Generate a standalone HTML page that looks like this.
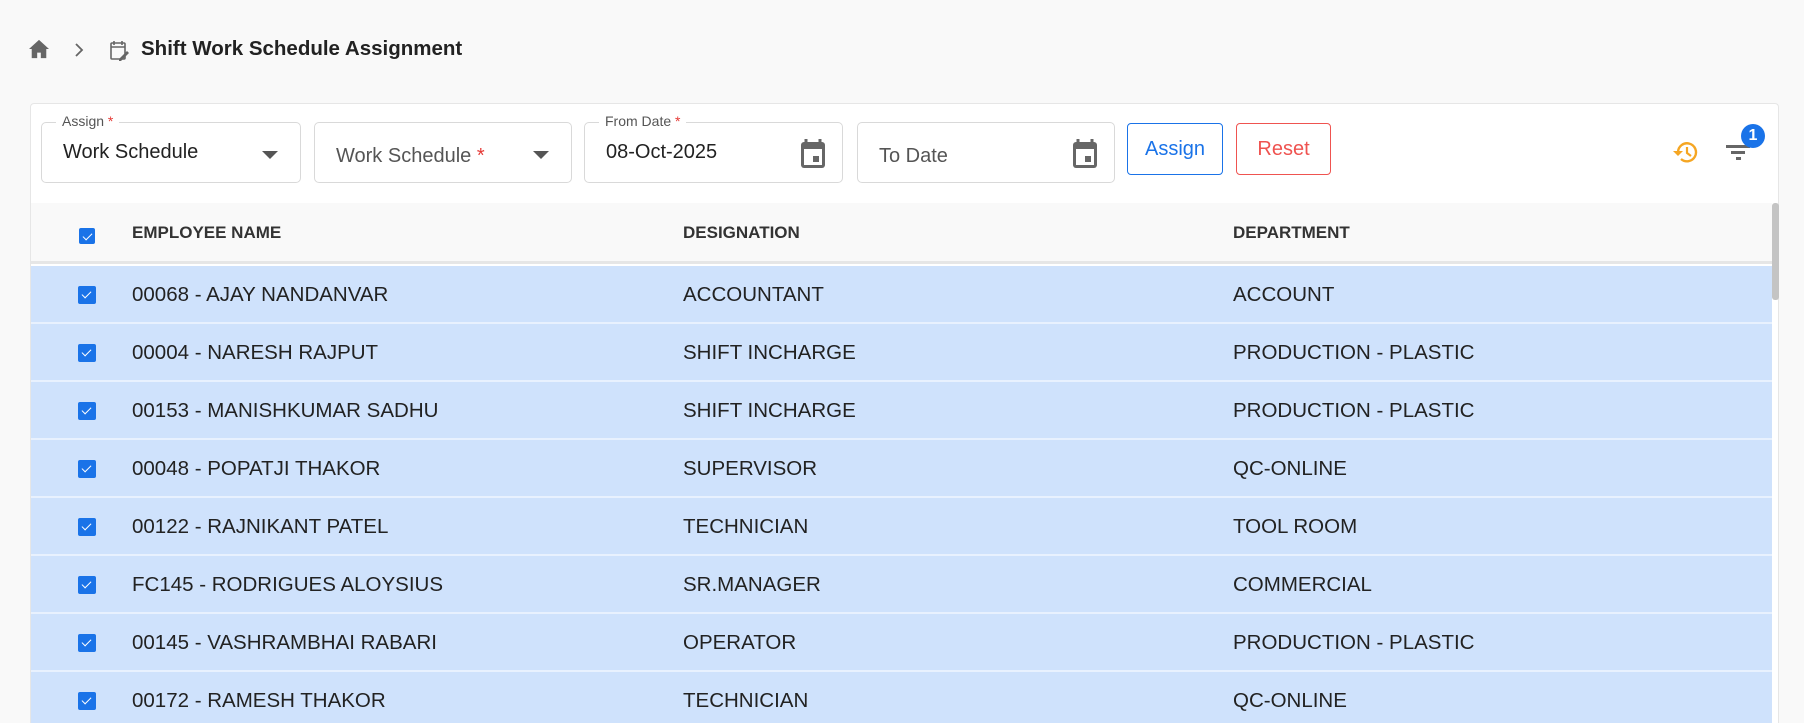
<!DOCTYPE html>
<html style="width:1804px;height:723px;overflow:hidden"><head><style>
*{box-sizing:border-box;margin:0;padding:0}
body{width:1804px;height:723px;overflow:hidden;background:#f9f9f9;font-family:"Liberation Sans",sans-serif;color:#222;position:relative}
.abs{position:absolute}
.card{left:30px;top:103px;width:1749px;height:620px;background:#fff;border:1px solid #e6e6e6;border-bottom:none;border-radius:4px 4px 0 0}
.field{position:absolute;top:122px;height:61px;border:1px solid #d9d9d9;border-radius:5px;background:#fff}
.lbl{position:absolute;top:-10px;left:14px;background:#fff;padding:0 6px;font-size:14px;color:#555}
.req{color:#e53935}
.val{position:absolute;left:21px;top:18px;font-size:20px;color:#222}
.ph{position:absolute;left:21px;top:22px;font-size:20px;color:#555}
.caret{position:absolute;right:22px;top:28px;width:0;height:0;border-left:8px solid transparent;border-right:8px solid transparent;border-top:8px solid #555}
.btn{position:absolute;top:123px;height:52px;border-radius:4px;font-size:20px;text-align:center;line-height:50px;background:#fff}
.hdr{left:31px;top:203px;width:1741px;height:61px;background:#f9f9f9;border-bottom:3px solid #e6e6e6}
.hdr span{position:absolute;top:20px;font-size:17px;font-weight:bold;color:#333}
.row{position:absolute;left:31px;width:1741px;height:58px;background:#cfe2fc;border-bottom:2px solid #e8f1fe}
.row span{position:absolute;top:17px;font-size:20.5px;color:#222}
.cb{position:absolute;left:47px;width:18px;height:18px;background:#1a73e8;border-radius:2px}
.cb:after{content:"";position:absolute;left:6px;top:3px;width:4px;height:8px;border:solid #fff;border-width:0 1.5px 1.5px 0;transform:rotate(45deg)}
</style></head><body>
<svg class="abs" style="left:28px;top:39px" width="22" height="20" viewBox="0 0 24 22"><path d="M12 1 1 11h3v10h6v-6h4v6h6V11h3z" fill="#666"/></svg>
<svg class="abs" style="left:74px;top:42px" width="10" height="16" viewBox="0 0 10 16"><path d="M2 2l6 6-6 6" fill="none" stroke="#666" stroke-width="1.8"/></svg>
<svg class="abs" style="left:108px;top:39px" width="24" height="24" viewBox="0 0 24 24"><rect x="3" y="4" width="14" height="16" rx="1" fill="none" stroke="#666" stroke-width="1.6"/><path d="M6 2v4M14 2v4M3 8h14" stroke="#666" stroke-width="1.6"/><path d="M11 20l8-8 2 2-8 8h-2z" fill="#666"/></svg>
<div class="abs" style="left:141px;top:37px;font-size:20.5px;font-weight:bold;color:#222">Shift Work Schedule Assignment</div>
<div class="abs card"></div>
<div class="field" style="left:41px;width:260px"><div class="lbl">Assign <span class="req">*</span></div><div class="val">Work Schedule</div><div class="caret"></div></div>
<div class="field" style="left:314px;width:258px"><div class="ph">Work Schedule <span class="req">*</span></div><div class="caret"></div></div>
<div class="field" style="left:584px;width:259px"><div class="lbl">From Date <span class="req">*</span></div><div class="val">08-Oct-2025</div>
<svg style="position:absolute;right:14px;top:15px" width="30" height="32" viewBox="0 0 30 32"><path d="M8 1v5M22 1v5" stroke="#666" stroke-width="3"/><rect x="3" y="4" width="24" height="26" rx="3" fill="#666"/><rect x="6" y="11" width="18" height="16" fill="#fff"/><rect x="15" y="18" width="6" height="6" fill="#666"/></svg></div>
<div class="field" style="left:857px;width:258px"><div class="ph">To Date</div>
<svg style="position:absolute;right:14px;top:15px" width="30" height="32" viewBox="0 0 30 32"><path d="M8 1v5M22 1v5" stroke="#666" stroke-width="3"/><rect x="3" y="4" width="24" height="26" rx="3" fill="#666"/><rect x="6" y="11" width="18" height="16" fill="#fff"/><rect x="15" y="18" width="6" height="6" fill="#666"/></svg></div>
<div class="btn" style="left:1127px;width:96px;border:1px solid #1a73e8;color:#1a73e8">Assign</div>
<div class="btn" style="left:1236px;width:95px;border:1px solid #ef5350;color:#ef5350">Reset</div>
<svg class="abs" style="left:1672px;top:139px" width="28" height="26" viewBox="0 0 28 26"><path d="M6 13a9 9 0 1 1 3 7" fill="none" stroke="#f5a623" stroke-width="2.4"/><path d="M1 12l5 5 5-5z" fill="#f5a623"/><path d="M15 8v6l4 3" fill="none" stroke="#f5a623" stroke-width="2.2"/></svg>
<div class="abs" style="left:1726px;top:145px;width:24px;height:3px;background:#666"></div>
<div class="abs" style="left:1731px;top:151px;width:14px;height:3px;background:#666"></div>
<div class="abs" style="left:1736px;top:157px;width:5px;height:3px;background:#666"></div>
<div class="abs" style="left:1741px;top:124px;width:24px;height:24px;border-radius:50%;background:#1a73e8;color:#fff;font-size:16px;text-align:center;line-height:24px;font-weight:bold">1</div>
<div class="abs hdr"><div class="cb" style="top:25px;left:48px;width:16px;height:16px"></div><span style="left:101px">EMPLOYEE NAME</span><span style="left:652px">DESIGNATION</span><span style="left:1202px">DEPARTMENT</span></div>
<div class="abs" style="left:1772px;top:203px;width:7px;height:97px;background:#c4c4c4;border-radius:3px"></div>
<div class="row" style="top:266px"><div class="cb" style="top:20px"></div><span style="left:101px">00068 - AJAY NANDANVAR</span><span style="left:652px">ACCOUNTANT</span><span style="left:1202px">ACCOUNT</span></div>
<div class="row" style="top:324px"><div class="cb" style="top:20px"></div><span style="left:101px">00004 - NARESH RAJPUT</span><span style="left:652px">SHIFT INCHARGE</span><span style="left:1202px">PRODUCTION - PLASTIC</span></div>
<div class="row" style="top:382px"><div class="cb" style="top:20px"></div><span style="left:101px">00153 - MANISHKUMAR SADHU</span><span style="left:652px">SHIFT INCHARGE</span><span style="left:1202px">PRODUCTION - PLASTIC</span></div>
<div class="row" style="top:440px"><div class="cb" style="top:20px"></div><span style="left:101px">00048 - POPATJI THAKOR</span><span style="left:652px">SUPERVISOR</span><span style="left:1202px">QC-ONLINE</span></div>
<div class="row" style="top:498px"><div class="cb" style="top:20px"></div><span style="left:101px">00122 - RAJNIKANT PATEL</span><span style="left:652px">TECHNICIAN</span><span style="left:1202px">TOOL ROOM</span></div>
<div class="row" style="top:556px"><div class="cb" style="top:20px"></div><span style="left:101px">FC145 - RODRIGUES ALOYSIUS</span><span style="left:652px">SR.MANAGER</span><span style="left:1202px">COMMERCIAL</span></div>
<div class="row" style="top:614px"><div class="cb" style="top:20px"></div><span style="left:101px">00145 - VASHRAMBHAI RABARI</span><span style="left:652px">OPERATOR</span><span style="left:1202px">PRODUCTION - PLASTIC</span></div>
<div class="row" style="top:672px;height:51px;border-bottom:none"><div class="cb" style="top:20px"></div><span style="left:101px">00172 - RAMESH THAKOR</span><span style="left:652px">TECHNICIAN</span><span style="left:1202px">QC-ONLINE</span></div>
</body></html>
